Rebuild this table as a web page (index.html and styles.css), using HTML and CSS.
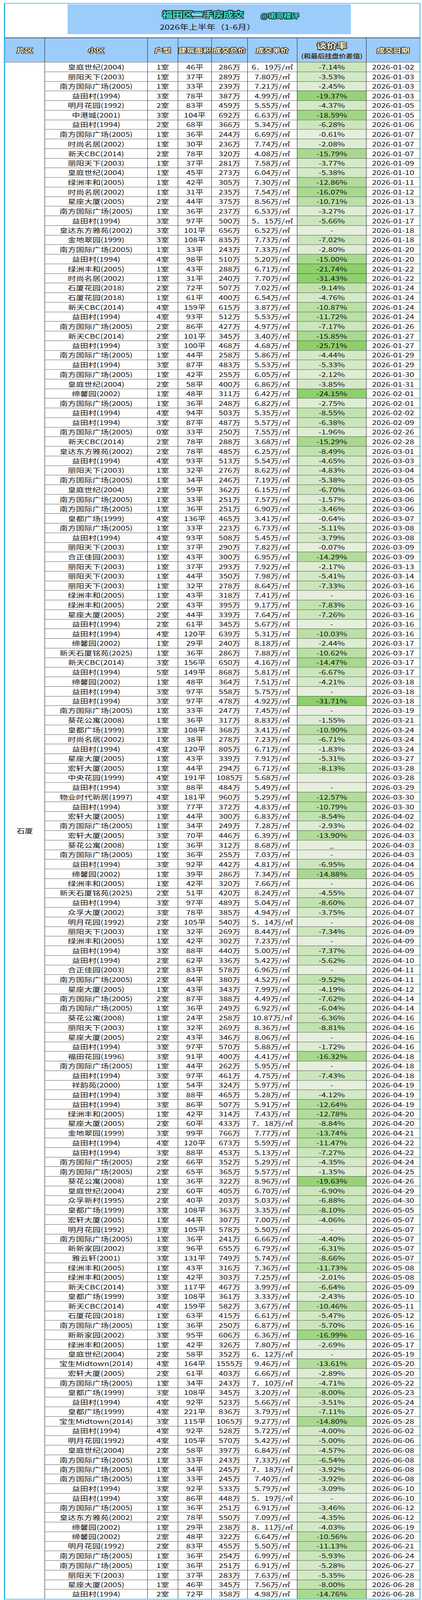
FILE: index.html
```html
<!DOCTYPE html>
<html lang="zh-CN">
<head>
<meta charset="utf-8">
<title>福田区二手房成交</title>
<link rel="stylesheet" href="styles.css">
</head>
<body>
<div class="viewport">
<div class="page">
<div class="frame">
<div class="top">
<div class="banner">
<div class="banner-line"><span class="title">福田区二手房成交</span><span class="tag">@诺哥楼评</span></div>
<div class="subtitle">2026年上半年（1-6月）</div>
</div>
</div>
<div class="sheet">
<div class="hd first s27">片区</div>
<div class="hd s27">小区</div>
<div class="hd s27">户型</div>
<div class="hd s20">建筑面积</div>
<div class="hd s21">成交总价</div>
<div class="hd s26">成交单价</div>
<div class="hd"><span class="hd-main">谈价率</span><span class="hd-sub">(和最后挂盘价差值)</span></div>
<div class="hd s20">成交日期</div>
<div class="area">石厦</div>
<div>皇庭世纪(2004)</div><div>1室</div><div>46平</div><div>286万</div><div>6．19万/㎡</div><div class="g3">-7.14%</div><div>2026-01-02</div>
<div>丽阳天下(2003)</div><div>1室</div><div>37平</div><div>289万</div><div>7.80万/㎡</div><div class="g2">-3.53%</div><div>2026-01-03</div>
<div>南方国际广场(2005)</div><div>1室</div><div>33平</div><div>239万</div><div>7.21万/㎡</div><div class="g1">-2.45%</div><div>2026-01-03</div>
<div>益田村(1994)</div><div>3室</div><div>78平</div><div>387万</div><div>4.99万/㎡</div><div class="g9">-19.37%</div><div>2026-01-03</div>
<div>明月花园(1992)</div><div>2室</div><div>83平</div><div>459万</div><div>5.55万/㎡</div><div class="g2">-4.37%</div><div>2026-01-05</div>
<div>中港城(2001)</div><div>3室</div><div>104平</div><div>692万</div><div>6.63万/㎡</div><div class="g8">-18.59%</div><div>2026-01-05</div>
<div>益田村(1994)</div><div>2室</div><div>68平</div><div>366万</div><div>5.34万/㎡</div><div class="g3">-6.28%</div><div>2026-01-06</div>
<div>南方国际广场(2005)</div><div>1室</div><div>36平</div><div>244万</div><div>6.69万/㎡</div><div class="g0">-0.61%</div><div>2026-01-07</div>
<div>时尚名居(2002)</div><div>1室</div><div>30平</div><div>236万</div><div>7.74万/㎡</div><div class="g1">-2.08%</div><div>2026-01-07</div>
<div>新天CBC(2014)</div><div>2室</div><div>78平</div><div>320万</div><div>4.08万/㎡</div><div class="g7">-15.79%</div><div>2026-01-07</div>
<div>丽阳天下(2003)</div><div>1室</div><div>37平</div><div>281万</div><div>7.58万/㎡</div><div class="g2">-3.77%</div><div>2026-01-09</div>
<div>皇庭世纪(2004)</div><div>1室</div><div>45平</div><div>273万</div><div>6.04万/㎡</div><div class="g2">-5.38%</div><div>2026-01-10</div>
<div>绿洲丰和(2005)</div><div>1室</div><div>42平</div><div>305万</div><div>7.30万/㎡</div><div class="g6">-12.86%</div><div>2026-01-11</div>
<div>时尚名居(2002)</div><div>1室</div><div>31平</div><div>235万</div><div>7.54万/㎡</div><div class="g7">-16.07%</div><div>2026-01-12</div>
<div>星座大厦(2005)</div><div>2室</div><div>44平</div><div>375万</div><div>8.56万/㎡</div><div class="g5">-10.71%</div><div>2026-01-13</div>
<div>南方国际广场(2005)</div><div>1室</div><div>36平</div><div>237万</div><div>6.53万/㎡</div><div class="g1">-3.27%</div><div>2026-01-17</div>
<div>益田村(1994)</div><div>3室</div><div>97平</div><div>500万</div><div>5．15万/㎡</div><div class="g3">-5.66%</div><div>2026-01-17</div>
<div>皇达东方雅苑(2002)</div><div>3室</div><div>101平</div><div>656万</div><div>6.52万/㎡</div><div class="g0">-</div><div>2026-01-18</div>
<div>金地翠园(1999)</div><div>3室</div><div>108平</div><div>835万</div><div>7.73万/㎡</div><div class="g3">-7.02%</div><div>2026-01-18</div>
<div>南方国际广场(2005)</div><div>1室</div><div>33平</div><div>243万</div><div>7.33万/㎡</div><div class="g1">-2.80%</div><div>2026-01-20</div>
<div>益田村(1994)</div><div>4室</div><div>98平</div><div>510万</div><div>5.20万/㎡</div><div class="g7">-15.00%</div><div>2026-01-20</div>
<div>绿洲丰和(2005)</div><div>1室</div><div>43平</div><div>288万</div><div>6.71万/㎡</div><div class="g10">-21.74%</div><div>2026-01-22</div>
<div>时尚名居(2002)</div><div>1室</div><div>31平</div><div>240万</div><div>7.70万/㎡</div><div class="g10">-31.43%</div><div>2026-01-22</div>
<div>石厦花园(2018)</div><div>2室</div><div>72平</div><div>507万</div><div>7.02万/㎡</div><div class="g4">-9.14%</div><div>2026-01-24</div>
<div>石厦花园(2018)</div><div>1室</div><div>61平</div><div>400万</div><div>6.54万/㎡</div><div class="g2">-4.76%</div><div>2026-01-24</div>
<div>新天CBC(2014)</div><div>4室</div><div>159平</div><div>615万</div><div>3.87万/㎡</div><div class="g5">-10.87%</div><div>2026-01-24</div>
<div>益田村(1994)</div><div>4室</div><div>93平</div><div>512万</div><div>5.53万/㎡</div><div class="g5">-11.72%</div><div>2026-01-24</div>
<div>南方国际广场(2005)</div><div>2室</div><div>86平</div><div>427万</div><div>4.97万/㎡</div><div class="g3">-7.17%</div><div>2026-01-26</div>
<div>新天CBC(2014)</div><div>2室</div><div>101平</div><div>345万</div><div>3.40万/㎡</div><div class="g7">-15.85%</div><div>2026-01-27</div>
<div>益田村(1994)</div><div>3室</div><div>100平</div><div>468万</div><div>4.68万/㎡</div><div class="g10">-25.71%</div><div>2026-01-27</div>
<div>南方国际广场(2005)</div><div>1室</div><div>44平</div><div>258万</div><div>5.86万/㎡</div><div class="g2">-4.44%</div><div>2026-01-29</div>
<div>益田村(1994)</div><div>3室</div><div>87平</div><div>483万</div><div>5.53万/㎡</div><div class="g2">-5.33%</div><div>2026-01-29</div>
<div>南方国际广场(2005)</div><div>1室</div><div>42平</div><div>255万</div><div>6.05万/㎡</div><div class="g1">-2.12%</div><div>2026-01-30</div>
<div>皇庭世纪(2004)</div><div>2室</div><div>58平</div><div>400万</div><div>6.86万/㎡</div><div class="g2">-3.85%</div><div>2026-01-31</div>
<div>缔馨园(2002)</div><div>1室</div><div>48平</div><div>311万</div><div>6.42万/㎡</div><div class="g10">-24.15%</div><div>2026-02-01</div>
<div>南方国际广场(2005)</div><div>1室</div><div>36平</div><div>248万</div><div>6.82万/㎡</div><div class="g1">-2.75%</div><div>2026-02-01</div>
<div>益田村(1994)</div><div>4室</div><div>94平</div><div>503万</div><div>5.35万/㎡</div><div class="g4">-8.55%</div><div>2026-02-02</div>
<div>益田村(1994)</div><div>3室</div><div>87平</div><div>487万</div><div>5.57万/㎡</div><div class="g3">-6.38%</div><div>2026-02-09</div>
<div>南方国际广场(2005)</div><div>0室</div><div>33平</div><div>250万</div><div>7.55万/㎡</div><div class="g1">-1.96%</div><div>2026-02-26</div>
<div>新天CBC(2014)</div><div>2室</div><div>78平</div><div>288万</div><div>3.68万/㎡</div><div class="g7">-15.29%</div><div>2026-02-28</div>
<div>皇达东方雅苑(2002)</div><div>2室</div><div>78平</div><div>485万</div><div>6.25万/㎡</div><div class="g4">-8.49%</div><div>2026-03-01</div>
<div>益田村(1994)</div><div>4室</div><div>93平</div><div>513万</div><div>5.54万/㎡</div><div class="g2">-4.65%</div><div>2026-03-03</div>
<div>丽阳天下(2003)</div><div>1室</div><div>32平</div><div>276万</div><div>8.62万/㎡</div><div class="g2">-4.83%</div><div>2026-03-04</div>
<div>南方国际广场(2005)</div><div>1室</div><div>34平</div><div>246万</div><div>7.19万/㎡</div><div class="g2">-5.38%</div><div>2026-03-05</div>
<div>皇庭世纪(2004)</div><div>2室</div><div>59平</div><div>362万</div><div>6.15万/㎡</div><div class="g3">-6.70%</div><div>2026-03-06</div>
<div>南方国际广场(2005)</div><div>1室</div><div>33平</div><div>251万</div><div>7.57万/㎡</div><div class="g1">-1.57%</div><div>2026-03-06</div>
<div>南方国际广场(2005)</div><div>1室</div><div>36平</div><div>251万</div><div>6.90万/㎡</div><div class="g2">-3.46%</div><div>2026-03-06</div>
<div>皇都广场(1999)</div><div>4室</div><div>136平</div><div>465万</div><div>3.41万/㎡</div><div class="g0">-0.64%</div><div>2026-03-07</div>
<div>南方国际广场(2005)</div><div>1室</div><div>33平</div><div>223万</div><div>6.73万/㎡</div><div class="g2">-5.11%</div><div>2026-03-08</div>
<div>益田村(1994)</div><div>4室</div><div>93平</div><div>508万</div><div>5.45万/㎡</div><div class="g2">-3.79%</div><div>2026-03-08</div>
<div>丽阳天下(2003)</div><div>1室</div><div>37平</div><div>290万</div><div>7.82万/㎡</div><div class="g0">-0.07%</div><div>2026-03-09</div>
<div>合正佳园(2003)</div><div>1室</div><div>43平</div><div>300万</div><div>6.95万/㎡</div><div class="g6">-14.29%</div><div>2026-03-09</div>
<div>丽阳天下(2003)</div><div>1室</div><div>37平</div><div>293万</div><div>7.92万/㎡</div><div class="g1">-2.17%</div><div>2026-03-13</div>
<div>丽阳天下(2003)</div><div>1室</div><div>44平</div><div>350万</div><div>7.98万/㎡</div><div class="g2">-5.41%</div><div>2026-03-14</div>
<div>丽阳天下(2003)</div><div>1室</div><div>32平</div><div>278万</div><div>8.64万/㎡</div><div class="g3">-7.33%</div><div>2026-03-16</div>
<div>绿洲丰和(2005)</div><div>1室</div><div>43平</div><div>318万</div><div>7.41万/㎡</div><div class="g0">-</div><div>2026-03-16</div>
<div>绿洲丰和(2005)</div><div>2室</div><div>43平</div><div>395万</div><div>9.17万/㎡</div><div class="g4">-7.83%</div><div>2026-03-16</div>
<div>星座大厦(2005)</div><div>2室</div><div>44平</div><div>339万</div><div>7.64万/㎡</div><div class="g3">-7.26%</div><div>2026-03-16</div>
<div>益田村(1994)</div><div>2室</div><div>61平</div><div>345万</div><div>5.67万/㎡</div><div class="g0">-</div><div>2026-03-16</div>
<div>益田村(1994)</div><div>4室</div><div>120平</div><div>639万</div><div>5.31万/㎡</div><div class="g5">-10.03%</div><div>2026-03-16</div>
<div>缔馨园(2002)</div><div>1室</div><div>29平</div><div>240万</div><div>8.18万/㎡</div><div class="g1">-2.44%</div><div>2026-03-17</div>
<div>新天石厦铭苑(2025)</div><div>1室</div><div>36平</div><div>286万</div><div>7.88万/㎡</div><div class="g5">-10.62%</div><div>2026-03-17</div>
<div>新天CBC(2014)</div><div>3室</div><div>156平</div><div>650万</div><div>4.16万/㎡</div><div class="g7">-14.47%</div><div>2026-03-17</div>
<div>益田村(1994)</div><div>5室</div><div>149平</div><div>868万</div><div>5.81万/㎡</div><div class="g3">-6.67%</div><div>2026-03-17</div>
<div>缔馨园(2002)</div><div>1室</div><div>48平</div><div>364万</div><div>7.51万/㎡</div><div class="g2">-4.21%</div><div>2026-03-18</div>
<div>益田村(1994)</div><div>3室</div><div>97平</div><div>558万</div><div>5.75万/㎡</div><div class="g0">-</div><div>2026-03-18</div>
<div>益田村(1994)</div><div>3室</div><div>97平</div><div>478万</div><div>4.92万/㎡</div><div class="g10">-31.71%</div><div>2026-03-18</div>
<div>南方国际广场(2005)</div><div>1室</div><div>33平</div><div>247万</div><div>7.45万/㎡</div><div class="g0">-</div><div>2026-03-19</div>
<div>葵花公寓(2008)</div><div>1室</div><div>36平</div><div>317万</div><div>8.83万/㎡</div><div class="g1">-1.55%</div><div>2026-03-21</div>
<div>皇都广场(1999)</div><div>3室</div><div>108平</div><div>368万</div><div>3.41万/㎡</div><div class="g5">-10.90%</div><div>2026-03-24</div>
<div>时尚名居(2002)</div><div>1室</div><div>38平</div><div>278万</div><div>7.23万/㎡</div><div class="g3">-6.71%</div><div>2026-03-24</div>
<div>益田村(1994)</div><div>4室</div><div>120平</div><div>805万</div><div>6.71万/㎡</div><div class="g1">-1.83%</div><div>2026-03-24</div>
<div>星座大厦(2005)</div><div>1室</div><div>43平</div><div>339万</div><div>7.91万/㎡</div><div class="g2">-5.31%</div><div>2026-03-27</div>
<div>宏轩大厦(2005)</div><div>1室</div><div>44平</div><div>294万</div><div>6.71万/㎡</div><div class="g4">-8.13%</div><div>2026-03-28</div>
<div>中央花园(1999)</div><div>4室</div><div>191平</div><div>1085万</div><div>5.68万/㎡</div><div class="g0"></div><div>2026-03-28</div>
<div>益田村(1994)</div><div>3室</div><div>88平</div><div>484万</div><div>5.49万/㎡</div><div class="g0">-</div><div>2026-03-29</div>
<div>物业时代新居(1997)</div><div>4室</div><div>181平</div><div>960万</div><div>5.29万/㎡</div><div class="g6">-12.57%</div><div>2026-03-30</div>
<div>益田村(1994)</div><div>3室</div><div>77平</div><div>372万</div><div>4.83万/㎡</div><div class="g5">-10.79%</div><div>2026-03-30</div>
<div>宏轩大厦(2005)</div><div>1室</div><div>44平</div><div>300万</div><div>6.83万/㎡</div><div class="g4">-8.54%</div><div>2026-04-02</div>
<div>南方国际广场(2005)</div><div>1室</div><div>34平</div><div>249万</div><div>7.28万/㎡</div><div class="g1">-2.93%</div><div>2026-04-02</div>
<div>宏轩大厦(2005)</div><div>3室</div><div>70平</div><div>446万</div><div>6.39万/㎡</div><div class="g6">-13.90%</div><div>2026-04-03</div>
<div>葵花公寓(2008)</div><div>1室</div><div>36平</div><div>312万</div><div>8.68万/㎡</div><div class="g0">_</div><div>2026-04-03</div>
<div>南方国际广场(2005)</div><div>1室</div><div>36平</div><div>255万</div><div>7.03万/㎡</div><div class="g0">-</div><div>2026-04-03</div>
<div>益田村(1994)</div><div>3室</div><div>92平</div><div>442万</div><div>4.81万/㎡</div><div class="g3">-6.95%</div><div>2026-04-04</div>
<div>缔馨园(2002)</div><div>1室</div><div>39平</div><div>286万</div><div>7.34万/㎡</div><div class="g7">-14.88%</div><div>2026-04-05</div>
<div>绿洲丰和(2005)</div><div>1室</div><div>42平</div><div>320万</div><div>7.66万/㎡</div><div class="g0">-</div><div>2026-04-06</div>
<div>新天石厦铭苑(2025)</div><div>2室</div><div>51平</div><div>420万</div><div>8.24万/㎡</div><div class="g2">-4.55%</div><div>2026-04-07</div>
<div>益田村(1994)</div><div>3室</div><div>97平</div><div>489万</div><div>5.04万/㎡</div><div class="g4">-8.60%</div><div>2026-04-07</div>
<div>众孚大厦(2002)</div><div>3室</div><div>78平</div><div>385万</div><div>4.94万/㎡</div><div class="g2">-3.75%</div><div>2026-04-07</div>
<div>明月花园(1992)</div><div>2室</div><div>105平</div><div>540万</div><div>5．14万/㎡</div><div class="g0">-</div><div>2026-04-08</div>
<div>丽阳天下(2003)</div><div>1室</div><div>32平</div><div>269万</div><div>8.44万/㎡</div><div class="g3">-7.34%</div><div>2026-04-09</div>
<div>绿洲丰和(2005)</div><div>1室</div><div>42平</div><div>302万</div><div>7.23万/㎡</div><div class="g0">-</div><div>2026-04-09</div>
<div>益田村(1994)</div><div>3室</div><div>88平</div><div>440万</div><div>5.00万/㎡</div><div class="g3">-7.37%</div><div>2026-04-09</div>
<div>益田村(1994)</div><div>2室</div><div>62平</div><div>336万</div><div>5.42万/㎡</div><div class="g3">-5.62%</div><div>2026-04-10</div>
<div>合正佳园(2003)</div><div>2室</div><div>83平</div><div>578万</div><div>6.96万/㎡</div><div class="g0">-</div><div>2026-04-11</div>
<div>南方国际广场(2005)</div><div>2室</div><div>84平</div><div>380万</div><div>4.52万/㎡</div><div class="g4">-9.52%</div><div>2026-04-11</div>
<div>星座大厦(2005)</div><div>1室</div><div>43平</div><div>343万</div><div>7.99万/㎡</div><div class="g2">-4.19%</div><div>2026-04-12</div>
<div>南方国际广场(2005)</div><div>2室</div><div>87平</div><div>388万</div><div>4.49万/㎡</div><div class="g3">-7.62%</div><div>2026-04-14</div>
<div>南方国际广场(2005)</div><div>1室</div><div>36平</div><div>249万</div><div>6.92万/㎡</div><div class="g3">-6.04%</div><div>2026-04-14</div>
<div>葵花公寓(2008)</div><div>1室</div><div>24平</div><div>258万</div><div>10.87万/㎡</div><div class="g3">-6.36%</div><div>2026-04-16</div>
<div>丽阳天下(2003)</div><div>1室</div><div>32平</div><div>269万</div><div>8.36万/㎡</div><div class="g4">-8.81%</div><div>2026-04-16</div>
<div>星座大厦(2005)</div><div>2室</div><div>43平</div><div>346万</div><div>8.06万/㎡</div><div class="g0">-</div><div>2026-04-16</div>
<div>益田村(1994)</div><div>3室</div><div>97平</div><div>570万</div><div>5.88万/㎡</div><div class="g1">-1.72%</div><div>2026-04-16</div>
<div>福田花园(1996)</div><div>3室</div><div>91平</div><div>400万</div><div>4.41万/㎡</div><div class="g7">-16.32%</div><div>2026-04-18</div>
<div>南方国际广场(2005)</div><div>1室</div><div>44平</div><div>262万</div><div>5.95万/㎡</div><div class="g0">-</div><div>2026-04-18</div>
<div>益田村(1994)</div><div>3室</div><div>97平</div><div>461万</div><div>4.75万/㎡</div><div class="g3">-7.43%</div><div>2026-04-18</div>
<div>祥韵苑(2000)</div><div>1室</div><div>54平</div><div>324万</div><div>5.97万/㎡</div><div class="g0">-</div><div>2026-04-19</div>
<div>益田村(1994)</div><div>3室</div><div>88平</div><div>465万</div><div>5.28万/㎡</div><div class="g2">-4.12%</div><div>2026-04-19</div>
<div>益田村(1994)</div><div>3室</div><div>86平</div><div>507万</div><div>5.91万/㎡</div><div class="g6">-12.64%</div><div>2026-04-19</div>
<div>绿洲丰和(2005)</div><div>1室</div><div>42平</div><div>314万</div><div>7.43万/㎡</div><div class="g6">-12.78%</div><div>2026-04-20</div>
<div>星座大厦(2005)</div><div>2室</div><div>60平</div><div>433万</div><div>7．18万/㎡</div><div class="g4">-8.84%</div><div>2026-04-20</div>
<div>金地翠园(1999)</div><div>3室</div><div>99平</div><div>766万</div><div>7.77万/㎡</div><div class="g6">-13.74%</div><div>2026-04-21</div>
<div>益田村(1994)</div><div>4室</div><div>120平</div><div>673万</div><div>5.59万/㎡</div><div class="g5">-11.47%</div><div>2026-04-22</div>
<div>益田村(1994)</div><div>3室</div><div>88平</div><div>453万</div><div>5.13万/㎡</div><div class="g3">-7.27%</div><div>2026-04-22</div>
<div>南方国际广场(2005)</div><div>2室</div><div>66平</div><div>352万</div><div>5.29万/㎡</div><div class="g2">-4.35%</div><div>2026-04-24</div>
<div>南方国际广场(2005)</div><div>2室</div><div>65平</div><div>365万</div><div>5.57万/㎡</div><div class="g1">-1.35%</div><div>2026-04-25</div>
<div>葵花公寓(2008)</div><div>1室</div><div>36平</div><div>322万</div><div>8.96万/㎡</div><div class="g9">-19.63%</div><div>2026-04-26</div>
<div>皇庭世纪(2004)</div><div>2室</div><div>60平</div><div>405万</div><div>6.70万/㎡</div><div class="g3">-6.90%</div><div>2026-04-29</div>
<div>众孚新村(1995)</div><div>2室</div><div>40平</div><div>203万</div><div>5.03万/㎡</div><div class="g3">-6.88%</div><div>2026-04-30</div>
<div>皇都广场(1999)</div><div>3室</div><div>108平</div><div>363万</div><div>3.35万/㎡</div><div class="g4">-8.10%</div><div>2026-05-05</div>
<div>宏轩大厦(2005)</div><div>1室</div><div>44平</div><div>307万</div><div>7.00万/㎡</div><div class="g2">-4.06%</div><div>2026-05-07</div>
<div>明月花园(1992)</div><div>3室</div><div>105平</div><div>578万</div><div>5.50万/㎡</div><div class="g0">-</div><div>2026-05-07</div>
<div>南方国际广场(2005)</div><div>1室</div><div>36平</div><div>241万</div><div>6.66万/㎡</div><div class="g2">-4.40%</div><div>2026-05-07</div>
<div>新新家园(2002)</div><div>3室</div><div>96平</div><div>655万</div><div>6.79万/㎡</div><div class="g3">-6.31%</div><div>2026-05-07</div>
<div>雅云轩(2001)</div><div>3室</div><div>131平</div><div>749万</div><div>5.74万/㎡</div><div class="g4">-8.66%</div><div>2026-05-07</div>
<div>绿洲丰和(2005)</div><div>1室</div><div>43平</div><div>316万</div><div>7.36万/㎡</div><div class="g5">-11.73%</div><div>2026-05-08</div>
<div>绿洲丰和(2005)</div><div>1室</div><div>42平</div><div>303万</div><div>7.25万/㎡</div><div class="g1">-2.01%</div><div>2026-05-08</div>
<div>新天CBC(2014)</div><div>3室</div><div>117平</div><div>467万</div><div>3.99万/㎡</div><div class="g3">-6.64%</div><div>2026-05-09</div>
<div>皇都广场(1999)</div><div>3室</div><div>108平</div><div>361万</div><div>3.33万/㎡</div><div class="g1">-2.43%</div><div>2026-05-10</div>
<div>新天CBC(2014)</div><div>4室</div><div>159平</div><div>582万</div><div>3.67万/㎡</div><div class="g5">-10.46%</div><div>2026-05-11</div>
<div>石厦花园(2018)</div><div>1室</div><div>63平</div><div>415万</div><div>6.61万/㎡</div><div class="g2">-5.47%</div><div>2026-05-12</div>
<div>南方国际广场(2005)</div><div>1室</div><div>36平</div><div>250万</div><div>6.87万/㎡</div><div class="g3">-5.70%</div><div>2026-05-16</div>
<div>新新家园(2002)</div><div>3室</div><div>95平</div><div>606万</div><div>6.36万/㎡</div><div class="g8">-16.99%</div><div>2026-05-16</div>
<div>绿洲丰和(2005)</div><div>1室</div><div>42平</div><div>326万</div><div>7.80万/㎡</div><div class="g1">-2.69%</div><div>2026-05-17</div>
<div>皇庭世纪(2004)</div><div>2室</div><div>58平</div><div>352万</div><div>6．12万/㎡</div><div class="g0">-</div><div>2026-05-19</div>
<div>宝生Midtown(2014)</div><div>4室</div><div>164平</div><div>1555万</div><div>9.46万/㎡</div><div class="g6">-13.61%</div><div>2026-05-20</div>
<div>宏轩大厦(2005)</div><div>2室</div><div>61平</div><div>403万</div><div>6.66万/㎡</div><div class="g1">-2.89%</div><div>2026-05-20</div>
<div>南方国际广场(2005)</div><div>1室</div><div>34平</div><div>243万</div><div>7．10万/㎡</div><div class="g2">-4.71%</div><div>2026-05-22</div>
<div>皇都广场(1999)</div><div>3室</div><div>108平</div><div>345万</div><div>3.20万/㎡</div><div class="g4">-8.00%</div><div>2026-05-23</div>
<div>益田村(1994)</div><div>4室</div><div>92平</div><div>523万</div><div>5.66万/㎡</div><div class="g2">-3.51%</div><div>2026-05-24</div>
<div>皇都广场(1999)</div><div>4室</div><div>221平</div><div>836万</div><div>3.79万/㎡</div><div class="g3">-7.11%</div><div>2026-05-27</div>
<div>宝生Midtown(2014)</div><div>3室</div><div>115平</div><div>1065万</div><div>9.27万/㎡</div><div class="g7">-14.80%</div><div>2026-05-28</div>
<div>益田村(1994)</div><div>4室</div><div>92平</div><div>528万</div><div>5.72万/㎡</div><div class="g2">-4.00%</div><div>2026-06-02</div>
<div>明月花园(1992)</div><div>4室</div><div>105平</div><div>570万</div><div>5.42万/㎡</div><div class="g2">-5.00%</div><div>2026-06-06</div>
<div>皇庭世纪(2004)</div><div>2室</div><div>58平</div><div>397万</div><div>6.84万/㎡</div><div class="g2">-4.57%</div><div>2026-06-08</div>
<div>南方国际广场(2005)</div><div>1室</div><div>33平</div><div>243万</div><div>7.33万/㎡</div><div class="g3">-6.54%</div><div>2026-06-08</div>
<div>南方国际广场(2005)</div><div>1室</div><div>34平</div><div>245万</div><div>7．18万/㎡</div><div class="g2">-3.92%</div><div>2026-06-08</div>
<div>南方国际广场(2005)</div><div>1室</div><div>33平</div><div>245万</div><div>7.40万/㎡</div><div class="g2">-3.92%</div><div>2026-06-08</div>
<div>益田村(1994)</div><div>3室</div><div>92平</div><div>533万</div><div>5.79万/㎡</div><div class="g1">-3.09%</div><div>2026-06-10</div>
<div>益田村(1994)</div><div>3室</div><div>86平</div><div>448万</div><div>5．19万/㎡</div><div class="g0">-</div><div>2026-06-10</div>
<div>南方国际广场(2005)</div><div>1室</div><div>36平</div><div>251万</div><div>6.91万/㎡</div><div class="g2">-3.46%</div><div>2026-06-12</div>
<div>皇达东方雅苑(2002)</div><div>2室</div><div>78平</div><div>550万</div><div>7.09万/㎡</div><div class="g2">-4.35%</div><div>2026-06-12</div>
<div>缔馨园(2002)</div><div>1室</div><div>29平</div><div>238万</div><div>8．11万/㎡</div><div class="g2">-4.03%</div><div>2026-06-19</div>
<div>缔馨园(2002)</div><div>2室</div><div>48平</div><div>322万</div><div>6.64万/㎡</div><div class="g5">-10.56%</div><div>2026-06-20</div>
<div>明月花园(1992)</div><div>2室</div><div>83平</div><div>455万</div><div>5.50万/㎡</div><div class="g5">-11.13%</div><div>2026-06-21</div>
<div>南方国际广场(2005)</div><div>1室</div><div>36平</div><div>254万</div><div>6.99万/㎡</div><div class="g3">-5.93%</div><div>2026-06-24</div>
<div>南方国际广场(2005)</div><div>1室</div><div>36平</div><div>251万</div><div>6.91万/㎡</div><div class="g2">-5.28%</div><div>2026-06-27</div>
<div>丽阳天下(2003)</div><div>1室</div><div>37平</div><div>283万</div><div>7.63万/㎡</div><div class="g2">-5.35%</div><div>2026-06-28</div>
<div>星座大厦(2005)</div><div>1室</div><div>46平</div><div>345万</div><div>7.56万/㎡</div><div class="g4">-8.00%</div><div>2026-06-28</div>
<div>益田村(1994)</div><div>2室</div><div>72平</div><div>358万</div><div>4.98万/㎡</div><div class="g7">-14.76%</div><div>2026-06-28</div>
</div>
</div>
</div>
</div>
</body>
</html>
```

FILE: styles.css
```css
html, body {
  margin: 0;
  padding: 0;
  background: #ffffff;
}

body {
  font-family: "Noto Sans CJK SC", "Noto Sans", "DejaVu Sans", sans-serif;
  color: #141414;
}

/* The capture window is 4096px tall; the sheet is drawn at its natural
   size and fitted vertically into that window. */
.viewport {
  height: 4096px;
  overflow: hidden;
}

.page {
  padding: 10px 0 0 10px;
  transform: scaleY(0.774437);
  transform-origin: 0 0;
}

.frame {
  box-sizing: border-box;
  width: 1066px;
  border: 2px solid #2bb3e8;
  border-left-width: 3px;
  background: #ffffff;
}

.top {
  height: 110px;
}

.banner {
  box-sizing: border-box;
  width: 725px;
  height: 99px;
  margin: 2px 0 0 160px;
  padding-top: 15px;
  background: #9cccfa;
}

.banner-line {
  display: flex;
  align-items: flex-start;
  padding-left: 242px;
}

.title {
  font-size: 27px;
  line-height: 36px;
  font-weight: 700;
  letter-spacing: -1px;
  color: #3fe3d2;
  text-shadow:
    -2px -2px 0 #15302f, 2px -2px 0 #15302f, -2px 2px 0 #15302f, 2px 2px 0 #15302f,
    0 -2px 0 #15302f, 0 2px 0 #15302f, -2px 0 0 #15302f, 2px 0 0 #15302f;
}

.tag {
  margin-left: 44px;
  margin-top: 5px;
  font-size: 20px;
  line-height: 36px;
  font-weight: 700;
  letter-spacing: -0.5px;
  color: #3fe3d2;
  text-shadow:
    -1.5px -1.5px 0 #15302f, 1.5px -1.5px 0 #15302f, -1.5px 1.5px 0 #15302f, 1.5px 1.5px 0 #15302f,
    0 -1.5px 0 #15302f, 0 1.5px 0 #15302f, -1.5px 0 0 #15302f, 1.5px 0 0 #15302f;
}

.subtitle {
  margin-top: 3px;
  padding-right: 8px;
  text-align: center;
  font-size: 23px;
  line-height: 30px;
  color: #161616;
}

.sheet {
  display: grid;
  grid-template-columns: 101px 263px 78px 86px 92px 127px 177px 137px;
  grid-template-rows: 81px;
  grid-auto-rows: 31.75px;
}

.sheet > div {
  box-sizing: border-box;
  display: flex;
  align-items: center;
  justify-content: center;
  border-top: 1.5px solid #333333;
  border-left: 1px solid #1c1c1c;
  font-size: 21px;
  line-height: 1;
  white-space: nowrap;
  overflow: hidden;
}

.sheet > .hd {
  flex-direction: column;
  background: #9cccfa;
  border-top: 2px solid #333333;
  font-weight: 700;
  color: #fff2cc;
  text-shadow:
    -1.5px -1.5px 0 #262626, 1.5px -1.5px 0 #262626, -1.5px 1.5px 0 #262626, 1.5px 1.5px 0 #262626,
    0 -1.5px 0 #262626, 0 1.5px 0 #262626, -1.5px 0 0 #262626, 1.5px 0 0 #262626;
}

.sheet > .first {
  border-left: none;
}

.s27 { font-size: 27px; }
.s26 { font-size: 26px; }
.s21 { font-size: 20.5px; }
.s20 { font-size: 19.5px; }

.hd-main {
  font-size: 26px;
  line-height: 32px;
}

.hd-sub {
  margin-top: 6px;
  font-size: 18.5px;
  line-height: 24px;
  color: #2e2e2e;
  text-shadow: 0 0 1px #fff2cc;
  letter-spacing: -0.5px;
}

.sheet > .area {
  grid-column: 1;
  grid-row: 2 / span 160;
  border-left: none;
  font-size: 21px;
}

.g0 { background: #e6efde; }
.g1 { background: #ddecd3; }
.g2 { background: #d4e9c7; }
.g3 { background: #cbe6bc; }
.g4 { background: #c2e3b0; }
.g5 { background: #bae0a5; }
.g6 { background: #b1dc9a; }
.g7 { background: #a8d98e; }
.g8 { background: #9fd683; }
.g9 { background: #96d377; }
.g10 { background: #8dd06c; }
```
